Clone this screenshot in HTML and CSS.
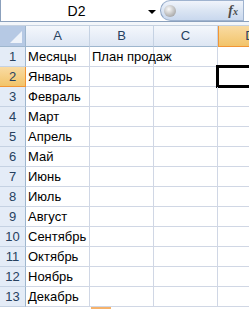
FILE: index.html
```html
<!DOCTYPE html>
<html lang="ru">
<head>
    <meta charset="UTF-8" />
    <title>Книга1 - План продаж</title>
    <link rel="stylesheet" href="styles.css">
</head>
<body>
    <div class="formula-bar">
        <div class="name-box">
            <span class="name-text">D2</span>
            <span class="name-arrow"></span>
        </div>
        <div class="fx-capsule">
            <span class="fx-ball"></span>
            <span class="fx-label">f<i>x</i></span>
        </div>
    </div>
    <div class="strip"></div>

    <div class="sheet">
        <div class="row head-row">
            <div class="corner"><span class="corner-tri"></span></div>
            <div class="col-head">A</div>
            <div class="col-head">B</div>
            <div class="col-head">C</div>
            <div class="col-head active">D</div>
        </div>
        <div id="rows"></div>
    </div>
    <div class="handle"></div>

    <script>
        const months = ['Месяцы', 'Январь', 'Февраль', 'Март', 'Апрель', 'Май', 'Июнь',
            'Июль', 'Август', 'Сентябрь', 'Октябрь', 'Ноябрь', 'Декабрь'];
        const rows = document.getElementById('rows');
        months.forEach((name, i) => {
            const n = i + 1;
            const row = document.createElement('div');
            row.className = 'row';
            row.innerHTML = `
                <div class="row-head ${n === 2 ? 'active' : ''}">${n}</div>
                <div class="cell">${name}</div>
                <div class="cell">${n === 1 ? 'План продаж' : ''}</div>
                <div class="cell"></div>
                <div class="cell">${n === 2 ? '<span class="selected"></span>' : ''}</div>
            `;
            rows.appendChild(row);
        });
    </script>
</body>
</html>
```

FILE: styles.css
```css
:root {
    --grid-line: #d0d7e5;
    --head-line: #9eb6ce;
    --head-text: #27415f;
}
html, body {
    margin: 0;
    width: 249px;
    height: 309px;
    overflow: hidden;
    background: #fff;
    font-family: 'Liberation Sans', Arial, sans-serif;
    font-size: 13px;
}
.formula-bar {
    display: flex;
    height: 21px;
    border-bottom: 1px solid #8ba0bc;
    background: #fff;
}
.name-box {
    width: 159px;
    display: flex;
    align-items: center;
    border-left: 1px solid #8ba0bc;
    position: relative;
}
.name-text {
    flex: 1;
    text-align: center;
    padding-left: 4px;
    color: #000;
    font-size: 14px;
}
.name-arrow {
    width: 0;
    height: 0;
    border-left: 4px solid transparent;
    border-right: 4px solid transparent;
    border-top: 4px solid #000;
    margin-right: 4px;
    margin-top: 2px;
}
.fx-capsule {
    width: 84px;
    display: flex;
    align-items: center;
    justify-content: space-between;
    border-radius: 11px 0 0 11px;
    border: 1px solid #9fb3cf;
    border-left-color: #8aa1c1;
    box-sizing: border-box;
    background: linear-gradient(#f0f4fb, #dbe5f3 50%, #c9d8ee);
}
.fx-ball {
    width: 12px;
    height: 12px;
    margin-left: 3px;
    border-radius: 50%;
    background: radial-gradient(circle at 40% 35%, #fafafa, #b9b9b9 60%, #8e8e8e);
}
.fx-label {
    font-family: 'Liberation Serif', serif;
    font-style: italic;
    font-size: 14px;
    font-weight: bold;
    color: #4c4c4c;
    margin-right: 5px;
}
.fx-label i { font-size: 10px; }
.strip {
    height: 3px;
    background: #f3f6fa;
    border-bottom: 1px solid #c5d1e0;
}
.row {
    display: flex;
    height: 20px;
}
.row > div {
    box-sizing: border-box;
    flex-shrink: 0;
}
.head-row { height: 21px; }
.corner {
    width: 26px;
    background: #b6c9e4;
    border-right: 1px solid #9eb6ce;
    border-bottom: 1px solid #9eb6ce;
    position: relative;
}
.corner-tri {
    position: absolute;
    right: 3px;
    bottom: 3px;
    width: 0;
    height: 0;
    border-left: 12px solid transparent;
    border-bottom: 12px solid #eef3fa;
}
.col-head {
    width: 64px;
    text-align: center;
    line-height: 20px;
    color: var(--head-text);
    background: linear-gradient(#f4f7fc, #dde6f3);
    border-right: 1px solid #c5d2e3;
    border-bottom: 1px solid var(--head-line);
}
.col-head.active {
    background: linear-gradient(#f9dba3, #f2c46a);
    border-left: 1px solid #f29536;
    border-bottom-color: #f29536;
}
.row-head {
    width: 26px;
    text-align: center;
    line-height: 19px;
    color: var(--head-text);
    background: #e4ecf7;
    border-right: 1px solid var(--head-line);
    border-bottom: 1px solid #c5d2e3;
}
.row-head.active {
    background: linear-gradient(#f9dba3, #f2c46a);
    border-right-color: #f29536;
    border-bottom-color: #f29536;
}
.cell {
    width: 64px;
    padding-left: 2px;
    line-height: 19px;
    white-space: nowrap;
    color: #000;
    border-right: 1px solid var(--grid-line);
    border-bottom: 1px solid var(--grid-line);
    position: relative;
}
.selected {
    position: absolute;
    left: -2px;
    top: -2px;
    width: 60px;
    height: 17px;
    border: 3px solid #000;
}
.handle {
    width: 20px;
    height: 2px;
    margin-left: 91px;
    background: #f6b26b;
}
```
